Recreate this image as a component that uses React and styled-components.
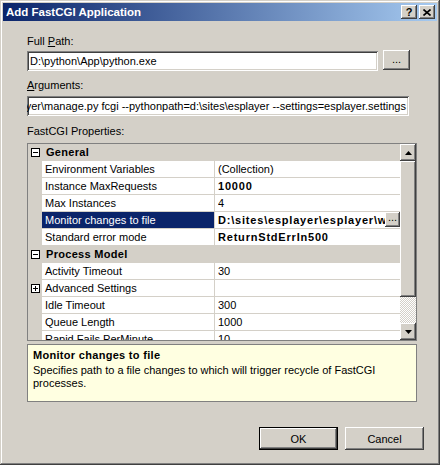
import React from 'react';
import styled, { createGlobalStyle } from 'styled-components';

const GlobalStyle = createGlobalStyle`
  html, body {
    margin: 0;
    padding: 0;
    background: #d4d0c8;
  }
  body {
    font-family: "Liberation Sans", Arial, sans-serif;
    font-size: 11px;
    color: #000;
  }
`;

const raised = `
  box-shadow: inset -1px -1px #404040, inset 1px 1px #ffffff,
    inset -2px -2px #808080, inset 2px 2px #d4d0c8;
`;

const sunken = `
  box-shadow: inset 1px 1px #808080, inset -1px -1px #ffffff,
    inset 2px 2px #404040, inset -2px -2px #d4d0c8;
`;

const Window = styled.div`
  width: 440px;
  height: 465px;
  box-sizing: border-box;
  padding: 3px;
  background: #d4d0c8;
  box-shadow: inset -1px -1px #404040, inset 1px 1px #d4d0c8,
    inset -2px -2px #808080, inset 2px 2px #ffffff;
  display: flex;
  flex-direction: column;
`;

const TitleBar = styled.div`
  height: 18px;
  display: flex;
  align-items: center;
  padding: 0 2px 0 3px;
  background: linear-gradient(to right, #0a246a, #a6caf0);
  color: #fff;
  font-weight: bold;
  font-size: 11.5px;
`;

const TitleText = styled.span`
  flex: 1;
`;

const CaptionButton = styled.div`
  width: 16px;
  height: 14px;
  margin-left: 2px;
  background: #d4d0c8;
  ${raised}
  display: flex;
  align-items: center;
  justify-content: center;
  color: #000;
  font-size: 11px;
  font-weight: bold;
`;

const Content = styled.div`
  flex: 1;
  display: flex;
  flex-direction: column;
  padding: 14px 20px 0 24px;
`;

const Label = styled.div`
  line-height: 13px;
  margin-top: ${p => p.$top || 0}px;
  margin-bottom: ${p => p.$bottom || 0}px;
`;

const FieldRow = styled.div`
  display: flex;
  align-items: flex-start;
  gap: 5px;
  margin-right: ${p => p.$right || 0}px;
`;

const TextBox = styled.div`
  flex: 1;
  height: 20px;
  box-sizing: border-box;
  padding: 0 3px;
  background: #fff;
  ${sunken}
  display: flex;
  align-items: center;
  justify-content: ${p => (p.$scrolled ? 'flex-end' : 'flex-start')};
  overflow: hidden;
  white-space: nowrap;
`;

const TextValue = styled.span`
  flex-shrink: 0;
`;

const BrowseButton = styled.div`
  width: 27px;
  height: 20px;
  margin-top: -1px;
  box-sizing: border-box;
  background: #d4d0c8;
  ${raised}
  display: flex;
  align-items: center;
  justify-content: center;
  padding-bottom: 2px;
`;

const PropertyGrid = styled.div`
  height: 198px;
  box-sizing: border-box;
  border: 1px solid #808080;
  display: flex;
  background: #d4d0c8;
`;

const Rows = styled.div`
  flex: 1;
  overflow: hidden;
`;

const CategoryRow = styled.div`
  height: 16px;
  margin-bottom: 1px;
  display: flex;
  align-items: center;
  font-weight: bold;
`;

const Gutter = styled.div`
  width: 14px;
  height: 100%;
  flex-shrink: 0;
  display: flex;
  align-items: center;
  justify-content: center;
`;

const ExpandBox = styled.div`
  width: 9px;
  height: 9px;
  box-sizing: border-box;
  border: 1px solid #000;
  background: #fff;
  display: flex;
`;

const CategoryName = styled.span`
  padding-left: 4px;
  letter-spacing: 0.3px;
`;

const PropRow = styled.div`
  height: 16px;
  margin-bottom: 1px;
  display: flex;
`;

const NameCell = styled.div`
  width: 172px;
  flex-shrink: 0;
  box-sizing: border-box;
  padding-left: 3px;
  line-height: 16px;
  background: ${p => (p.$selected ? '#0a246a' : '#fff')};
  color: ${p => (p.$selected ? '#fff' : '#000')};
  white-space: nowrap;
  overflow: hidden;
`;

const ValueCell = styled.div`
  flex: 1;
  min-width: 0;
  margin-left: 1px;
  padding-left: 3px;
  line-height: 16px;
  background: #fff;
  display: flex;
  font-weight: ${p => (p.$bold ? 'bold' : 'normal')};
  letter-spacing: ${p => (p.$bold ? '0.8px' : '0')};
  white-space: nowrap;
`;

const ValueText = styled.span`
  flex: 1;
  overflow: hidden;
`;

const CellButton = styled.div`
  width: 15px;
  height: 15px;
  flex-shrink: 0;
  background: #d4d0c8;
  ${raised}
  font-weight: normal;
  letter-spacing: 0;
  line-height: 11px;
  text-align: center;
`;

const ScrollBar = styled.div`
  width: 16px;
  display: flex;
  flex-direction: column;
`;

const ScrollButton = styled.div`
  height: 17px;
  background: #d4d0c8;
  ${raised}
  display: flex;
  align-items: center;
  justify-content: center;
`;

const Thumb = styled.div`
  height: 136px;
  background: #d4d0c8;
  ${raised}
`;

const Track = styled.div`
  flex: 1;
  background: repeating-conic-gradient(#ffffff 0 25%, #d4d0c8 0 50%) 0 0 / 2px 2px;
`;

const Description = styled.div`
  height: 58px;
  margin-top: 3px;
  box-sizing: border-box;
  border: 1px solid #808080;
  background: #ffffe1;
  padding: 4px 5px;
  line-height: 13px;
`;

const DescTitle = styled.div`
  font-weight: bold;
  letter-spacing: 0.3px;
  margin-bottom: 2px;
`;

const Footer = styled.div`
  display: flex;
  justify-content: flex-end;
  gap: 7px;
  margin-top: 25px;
  margin-right: -7px;
`;

const DialogButton = styled.div`
  width: 79px;
  height: 23px;
  box-sizing: border-box;
  background: #d4d0c8;
  display: flex;
  align-items: center;
  justify-content: center;
  ${p =>
    p.$default
      ? `box-shadow: inset 0 0 0 1px #000000, inset -2px -2px #404040, inset 2px 2px #ffffff,
          inset -3px -3px #808080;`
      : raised}
`;

const Arrow = ({ down }) => (
  <svg width="7" height="4" viewBox="0 0 7 4">
    <path d={down ? 'M0 0H7L3.5 4Z' : 'M0 4H7L3.5 0Z'} fill="#000" />
  </svg>
);

const Sign = ({ plus }) => (
  <svg width="7" height="7" viewBox="0 0 7 7">
    <path d="M1 3.5H6" stroke="#000" strokeWidth="1" />
    {plus && <path d="M3.5 1V6" stroke="#000" strokeWidth="1" />}
  </svg>
);

const general = [
  { name: 'Environment Variables', value: '(Collection)' },
  { name: 'Instance MaxRequests', value: '10000', bold: true },
  { name: 'Max Instances', value: '4' },
  { name: 'Monitor changes to file', value: 'D:\\sites\\esplayer\\esplayer\\web.config', bold: true, selected: true },
  { name: 'Standard error mode', value: 'ReturnStdErrIn500', bold: true },
];

const processModel = [
  { name: 'Activity Timeout', value: '30' },
  { name: 'Advanced Settings', value: '', expand: true },
  { name: 'Idle Timeout', value: '300' },
  { name: 'Queue Length', value: '1000' },
  { name: 'Rapid Fails PerMinute', value: '10' },
];

function Category({ name }) {
  return (
    <CategoryRow>
      <Gutter>
        <ExpandBox>
          <Sign />
        </ExpandBox>
      </Gutter>
      <CategoryName>{name}</CategoryName>
    </CategoryRow>
  );
}

function Property({ row }) {
  return (
    <PropRow>
      <Gutter>
        {row.expand && (
          <ExpandBox>
            <Sign plus />
          </ExpandBox>
        )}
      </Gutter>
      <NameCell $selected={row.selected}>{row.name}</NameCell>
      <ValueCell $bold={row.bold}>
        <ValueText>{row.value}</ValueText>
        {row.selected && <CellButton>...</CellButton>}
      </ValueCell>
    </PropRow>
  );
}

export default function App() {
  return (
    <>
      <GlobalStyle />
      <Window>
        <TitleBar>
          <TitleText>Add FastCGI Application</TitleText>
          <CaptionButton>?</CaptionButton>
          <CaptionButton>
            <svg width="8" height="7" viewBox="0 0 8 7">
              <path d="M0.5 0.5L7.5 6.5M7.5 0.5L0.5 6.5" stroke="#000" strokeWidth="1.6" />
            </svg>
          </CaptionButton>
        </TitleBar>
        <Content>
          <Label $bottom={3}>
            Full <u>P</u>ath:
          </Label>
          <FieldRow $right={7}>
            <TextBox>
              <TextValue>{'D:\\python\\App\\python.exe'}</TextValue>
            </TextBox>
            <BrowseButton>...</BrowseButton>
          </FieldRow>
          <Label $top={8} $bottom={4}>
            <u>A</u>rguments:
          </Label>
          <FieldRow $right={8}>
            <TextBox $scrolled>
              <TextValue>
                {'D:\\sites\\esplayer\\esplayer\\manage.py fcgi --pythonpath=d:\\sites\\esplayer --settings=esplayer.settings'}
              </TextValue>
            </TextBox>
          </FieldRow>
          <Label $top={9} $bottom={5}>
            FastCGI Properties:
          </Label>
          <PropertyGrid>
            <Rows>
              <Category name="General" />
              {general.map(row => (
                <Property key={row.name} row={row} />
              ))}
              <Category name="Process Model" />
              {processModel.map(row => (
                <Property key={row.name} row={row} />
              ))}
            </Rows>
            <ScrollBar>
              <ScrollButton>
                <Arrow />
              </ScrollButton>
              <Thumb />
              <Track />
              <ScrollButton>
                <Arrow down />
              </ScrollButton>
            </ScrollBar>
          </PropertyGrid>
          <Description>
            <DescTitle>Monitor changes to file</DescTitle>
            Specifies path to a file changes to which will trigger recycle of FastCGI processes.
          </Description>
          <Footer>
            <DialogButton $default>OK</DialogButton>
            <DialogButton>Cancel</DialogButton>
          </Footer>
        </Content>
      </Window>
    </>
  );
}
